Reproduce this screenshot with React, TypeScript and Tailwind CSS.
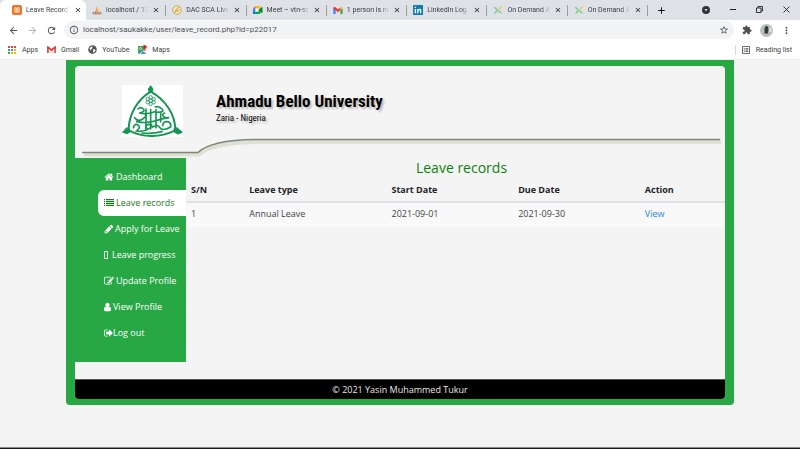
import type { ReactNode } from "react";
import {
  MdArrowBack,
  MdArrowForward,
  MdRefresh,
  MdInfoOutline,
  MdStarBorder,
  MdExtension,
  MdMoreVert,
  MdClose,
  MdAdd,
  MdOutlineListAlt,
  MdArrowDropDown,
} from "react-icons/md";

function XamppIcon() {
  return (
    <svg viewBox="0 0 18 18" className="size-[10px] shrink-0">
      <rect width="18" height="18" rx="3" fill="#ee7623" />
      <path d="M5 5h3v3h2V5h3v3l-2 1 2 1v3h-3v-3H8v3H5v-3l2-1-2-1z" fill="none" stroke="#fff" strokeWidth="1.3" />
    </svg>
  );
}

function PhpMyAdminIcon() {
  return (
    <svg viewBox="0 0 20 18" className="h-[9px] w-[10px] shrink-0">
      <path d="M8 1c3 2 4 7 4 11H6c2-3 3-7 2-11z" fill="#f5a547" />
      <path d="M13 4c2 2 3 5 2 8h-2z" fill="#f5c083" />
      <path d="M1 14l2-3 2 3 2-4 3 4 2-3 3 3 3-3 1 5H1z" fill="#8b8298" />
      <path d="M2 16h16" stroke="#ef9c3c" strokeWidth="2" />
    </svg>
  );
}

function DacIcon() {
  return (
    <svg viewBox="0 0 20 20" className="size-[10px] shrink-0">
      <circle cx="10" cy="10" r="8.5" fill="#f5edcc" stroke="#c5a63d" strokeWidth="2" />
      <path d="M6 15c1-5 3-8 8-10M8 12h4l2-3" fill="none" stroke="#b3922c" strokeWidth="2" />
    </svg>
  );
}

function MeetIcon() {
  return (
    <svg viewBox="0 0 20 16" className="h-[8px] w-[10px] shrink-0">
      <path d="M0 5l5-5v5z" fill="#ea4335" />
      <path d="M0 5h5v6H0z" fill="#2684fc" />
      <path d="M0 11h5v5H1q-1 0-1-1z" fill="#0066da" />
      <path d="M5 0h8q2 0 2 2v5l-4 1V5H5z" fill="#ffba00" />
      <path d="M5 11h6V8l4 1v5q0 2-2 2H5z" fill="#00ac47" />
      <path d="M5 5h6v6H5z" fill="#fff" />
      <path d="M11 8l7-6q1-1 1 1v10q0 2-1 1z" fill="#00832d" />
    </svg>
  );
}

function GmailIcon() {
  return (
    <svg viewBox="0 0 20 15" className="h-[7px] w-[10px] shrink-0">
      <path d="M0 3v11q0 1 1 1h4V6z" fill="#4285f4" />
      <path d="M15 6v9h4q1 0 1-1V3z" fill="#34a853" />
      <path d="M15 1v6l5-4V2q-1-3-4-1z" fill="#fbbc04" />
      <path d="M5 7V1l5 4 5-4v6l-5 4z" fill="#ea4335" />
      <path d="M0 2v1l5 4V1Q2-1 0 2z" fill="#c5221f" />
    </svg>
  );
}

function GmailRedIcon() {
  return (
    <svg viewBox="0 0 20 15" className="h-[7px] w-[9px] shrink-0">
      <path d="M4 4v11h12V4l-6 6z" fill="#f3e3e2" />
      <path d="M2 15V2l8 7 8-7v13" fill="none" stroke="#d93a30" strokeWidth="3.4" />
    </svg>
  );
}

function LinkedInIcon() {
  return (
    <svg viewBox="0 0 18 18" className="size-[10px] shrink-0">
      <rect width="18" height="18" rx="1" fill="#0b7fb0" />
      <path d="M3 7h2.5v8H3zM3 3h2.5v2.5H3zM7.500 7H10v1.200C11.500 6.200 15 6.500 15 10v5h-2.500v-4.500c0-2-2.500-2-2.500 0V15H7.500z" fill="#fff" />
    </svg>
  );
}

function OnDemandIcon() {
  return (
    <svg viewBox="0 0 18 18" className="size-[10px] shrink-0">
      <path d="M1 3c4 0 6 2 8 6-4 0-6-2-8-6z" fill="#74c5cf" />
      <path d="M17 2c-1 4-4 7-8 7 1-4 4-7 8-7z" fill="#f2cf63" />
      <path d="M9 9c4 0 6 3 7 7-4-1-7-3-7-7z" fill="#8dcb9a" />
      <path d="M9 9c0 4-3 6-7 7 1-4 3-7 7-7z" fill="#8ecf75" />
    </svg>
  );
}

function AppsIcon() {
  const colors = ["#ea4335", "#ea4335", "#ea4335", "#34a853", "#4285f4", "#fbbc04", "#34a853", "#fbbc04", "#fbbc04"];
  return (
    <svg viewBox="0 0 16 16" className="size-[8px] shrink-0">
      {colors.map((color, i) => (
        <rect key={i} x={(i % 3) * 6} y={Math.floor(i / 3) * 6} width="4" height="4" fill={color} />
      ))}
    </svg>
  );
}

function GlobeIcon() {
  return (
    <svg viewBox="0 0 18 18" className="size-[9px] shrink-0">
      <circle cx="9" cy="9" r="8.500" fill="#505357" />
      <path d="M3 6c2-3 5-3 6-3 1 2-1 2-1 4s-3 1-2 3-2 1-3-4zM10 9c2-1 5 0 5 2-1 2-3 4-5 4-1-2 1-2 0-6z" fill="#fff" />
    </svg>
  );
}

function MapsIcon() {
  return (
    <svg viewBox="0 0 18 18" className="size-[9px] shrink-0">
      <rect y="2" width="16" height="16" rx="2" fill="#3fa35f" />
      <path d="M2 18L16 6v10q0 2-2 2z" fill="#d8dde2" />
      <path d="M5 18l5-6 6 6z" fill="#4a8cf0" />
      <circle cx="5" cy="7" r="2" fill="none" stroke="#fff" strokeWidth="1.200" />
      <path d="M13 0c3 0 5 2 5 4 0 3-4 4-5 8-1-4-4-5-4-8 0-2 1-4 4-4z" fill="#dc4436" />
      <circle cx="13" cy="4" r="1.500" fill="#7c1c14" />
    </svg>
  );
}

const tabs: { title: string; icon: ReactNode }[] = [
  { title: "Leave Record", icon: <XamppIcon /> },
  { title: "localhost / 12", icon: <PhpMyAdminIcon /> },
  { title: "DAC SCA Live", icon: <DacIcon /> },
  { title: "Meet – vtn-sc", icon: <MeetIcon /> },
  { title: "1 person is no", icon: <GmailIcon /> },
  { title: "LinkedIn Log", icon: <LinkedInIcon /> },
  { title: "On Demand A", icon: <OnDemandIcon /> },
  { title: "On Demand A", icon: <OnDemandIcon /> },
];

function TabStrip() {
  return (
    <div className="flex h-5 items-stretch bg-[#dee1e6]">
      <div className="flex w-[81%] items-stretch">
        {tabs.map((tab, i) => (
          <div
            key={i}
            className={
              i === 0
                ? "flex w-[86px] shrink-0 items-center gap-1 rounded-t-md bg-white pr-1 pl-3"
                : "flex min-w-0 flex-1 items-center gap-1 pl-[6px]"
            }
          >
            {tab.icon}
            <span className="min-w-0 flex-1 mask-r-from-80% whitespace-nowrap text-[#3c4043]">{tab.title}</span>
            <button type="button" aria-label="Close tab" className="text-[#202124]">
              <MdClose className="size-[8px]" />
            </button>
            <span className={i === 0 ? "hidden" : "ml-px h-[11px] w-px bg-[#9a9da2]"} />
          </div>
        ))}
      </div>
      <div className="flex flex-1 items-center pl-2">
        <button type="button" aria-label="New tab">
          <MdAdd className="size-[11px]" />
        </button>
      </div>
      <div className="flex items-center gap-5 pr-[10px] pb-px text-[#202124]">
        <button type="button" aria-label="Search tabs" className="rounded-full bg-[#303338] text-white">
          <MdArrowDropDown className="size-[8px]" />
        </button>
        <button type="button" aria-label="Minimize" className="h-px w-[6px] bg-[#202124]" />
        <button type="button" aria-label="Restore">
          <svg viewBox="0 0 14 14" className="size-[7px]" fill="none" stroke="currentColor" strokeWidth="1.800">
            <path d="M1 4h9v9H1zM4 4V1h9v9h-3" />
          </svg>
        </button>
        <button type="button" aria-label="Close window">
          <svg viewBox="0 0 14 14" className="size-[7px]" stroke="currentColor" strokeWidth="1.800">
            <path d="M1 1l12 12M13 1L1 13" />
          </svg>
        </button>
      </div>
    </div>
  );
}

function AddressBar() {
  return (
    <div className="flex h-5 items-center bg-white px-2 text-[#4d5156]">
      <div className="flex w-14 items-center gap-2">
        <button type="button" aria-label="Back">
          <MdArrowBack className="size-[11px]" />
        </button>
        <button type="button" aria-label="Forward" className="text-[#b4b7ba]">
          <MdArrowForward className="size-[11px]" />
        </button>
        <button type="button" aria-label="Reload">
          <MdRefresh className="size-[11px]" />
        </button>
      </div>
      <div className="flex h-[18px] flex-1 items-center gap-1 rounded-full bg-[#f1f3f4] px-[5px]">
        <MdInfoOutline className="size-[10px]" />
        <input
          aria-label="Address"
          className="min-w-0 flex-1 bg-transparent text-[8px] text-[#4d5156] outline-none"
          defaultValue="localhost/saukakke/user/leave_record.php?id=p22017"
        />
        <button type="button" aria-label="Bookmark this page">
          <MdStarBorder className="size-[10px]" />
        </button>
      </div>
      <div className="flex items-center gap-2 pl-2">
        <button type="button" aria-label="Extensions">
          <MdExtension className="size-[10px]" />
        </button>
        <button type="button" aria-label="Account">
          <svg viewBox="0 0 26 26" className="size-[13px]">
            <circle cx="13" cy="13" r="13" fill="#b9bfb9" />
            <path d="M9 19V11q0-7 4-7t4 7l-1 8z" fill="#313b3c" />
            <path d="M18 8h5v8h-5z" fill="#dfe2df" />
          </svg>
        </button>
        <button type="button" aria-label="Menu">
          <MdMoreVert className="size-[11px]" />
        </button>
      </div>
    </div>
  );
}

function BookmarksBar() {
  return (
    <nav aria-label="Bookmarks" className="flex h-5 items-center gap-[9px] border-b border-[#ececec] bg-white px-2 text-[#3c4043]">
      <a href="#apps" className="flex items-center gap-[6px]">
        <AppsIcon />
        Apps
      </a>
      <a href="#gmail" className="flex items-center gap-[5px]">
        <GmailRedIcon />
        Gmail
      </a>
      <a href="#youtube" className="flex items-center gap-[5px]">
        <GlobeIcon />
        YouTube
      </a>
      <a href="#maps" className="flex items-center gap-[5px]">
        <MapsIcon />
        Maps
      </a>
      <a href="#reading" className="ml-auto flex items-center gap-[5px] border-l border-[#dadce0] pl-[5px]">
        <MdOutlineListAlt className="size-[10px]" />
        Reading list
      </a>
    </nav>
  );
}

function Crest() {
  return (
    <svg viewBox="0 0 183 156" className="h-[52px] w-[61px] bg-white" fill="none" stroke="#159653" role="img" aria-label="University crest">
      <path d="M86 20C46 44 20 88 20 136Q88 170 160 136C160 88 130 44 86 20z" strokeWidth="6" />
      <path d="M86 2l-7 10 3 10h8l3-10zM2 142l12-14 8 3 2 10-9 5zM181 142l-16-14-9 3v10l12 6z" fill="#159653" strokeWidth="3" />
      <g strokeWidth="2.500">
        <circle cx="86" cy="47" r="5" />
        <circle cx="86" cy="37" r="5" />
        <circle cx="86" cy="57" r="5" />
        <circle cx="77" cy="42" r="5" />
        <circle cx="95" cy="42" r="5" />
        <circle cx="77" cy="52" r="5" />
        <circle cx="95" cy="52" r="5" />
      </g>
      <g strokeWidth="5" strokeLinecap="round">
        <path d="M48 72q8-8 16 0t-12 12q22 6 46-4M100 66q10-4 20 6t-16 10" />
        <path d="M38 98q10 14 24 4t8-14M44 110q30 6 54-2t42-10M128 84q-10 4-4 10t16 4" />
        <path d="M72 72v62M86 74v58M102 74v54M116 86v24" />
        <path d="M34 128q4-14 14-8t-4 18q22 4 38-8t-2-12q-14 4-6 14M92 126q14-10 22 2t32-2q2-14-10-16t-14 12" />
        <path d="M60 144q30 4 60-4" />
      </g>
    </svg>
  );
}

function Banner() {
  return (
    <header>
      <div className="flex items-start gap-[33px] pt-[19px] pl-[47px] leading-none">
        <Crest />
        <div className="pt-1 font-['Roboto_Condensed','Open_Sans_Condensed','Liberation_Sans_Narrow','Liberation_Sans',sans-serif] text-black">
          <h1 className="text-[17px] leading-6 font-bold text-shadow-[2px_2px_2px_#bbbbbb]">Ahmadu Bello University</h1>
          <p className="text-[9px] leading-[10px] text-shadow-[2px_2px_2px_#bbbbbb]">Zaria - Nigeria</p>
        </div>
      </div>
      <svg viewBox="0 0 650 21" preserveAspectRatio="none" className="block h-[21px] w-full" fill="none">
        <path d="M9 17.500H124Q136 6 180 5H646" stroke="#dde1d3" strokeWidth="4" />
        <path d="M7 15.500H123Q136 3 180 2.500H645" stroke="#7d8776" strokeWidth="1.500" />
      </svg>
    </header>
  );
}

function Glyph({ d }: { d: string }) {
  return (
    <svg viewBox="0 0 1792 1792" className="size-[10px] shrink-0" fill="currentColor">
      <path d={d} />
    </svg>
  );
}

const menu: { label: string; icon: ReactNode; spacing: string }[] = [
  {
    label: "Dashboard",
    spacing: "gap-[2px]",
    icon: (
      <Glyph d="M1472 992v480q0 26-19 45t-45 19h-384v-384h-256v384h-384q-26 0-45-19t-19-45v-480q0-1 .5-3t.5-3l575-474 575 474q1 2 1 6zm223-69l-62 74q-8 9-21 11h-3q-13 0-21-7l-692-577-692 577q-12 8-24 7-13-2-21-11l-62-74q-8-10-7-23.500t11-21.500l719-599q32-26 76-26t76 26l244 204v-195q0-14 9-23t23-9h192q14 0 23 9t9 23v408l219 182q10 8 11 21.500t-7 23.500z" />
    ),
  },
  {
    label: "Leave records",
    spacing: "gap-[2px]",
    icon: (
      <svg viewBox="0 0 10 10" className="size-[10px] shrink-0" fill="currentColor" shapeRendering="crispEdges">
        <path d="M0 1h1v1H0zM2 1h8v1H2zM0 3h1v1H0zM2 3h8v1H2zM0 5h1v1H0zM2 5h8v1H2zM0 7h1v1H0zM2 7h8v1H2z" />
        <path d="M0 2h1v1H0zM2 2h8v1H2zM0 4h1v1H0zM2 4h8v1H2zM0 6h1v1H0zM2 6h8v1H2z" fillOpacity="0.25" />
      </svg>
    ),
  },
  {
    label: "Apply for Leave",
    spacing: "gap-px",
    icon: (
      <Glyph d="M491 1536l91-91-235-235-91 91v107h128v128h107zM960 416l416 416-832 832h-416v-416zm683 96q0 53-37 90l-166 166-416-416 166-165q36-38 90-38 53 0 91 38l235 234q37 39 37 91z" />
    ),
  },
  {
    label: "Leave progress",
    spacing: "gap-1",
    icon: <span className="h-2 w-1 border border-white/80" />,
  },
  {
    label: "Update Profile",
    spacing: "gap-[2px]",
    icon: (
      <Glyph d="M888 1184l116-116-152-152-116 116v56h96v96h56zm440-720q-16-16-33 1l-350 350q-17 17-1 33t33-1l350-350q17-17 1-33zm80 594v190q0 119-84.500 203.500t-203.500 84.500h-832q-119 0-203.500-84.500t-84.500-203.500v-832q0-119 84.500-203.500t203.500-84.500h832q63 0 117 25 15 7 18 23 3 17-9 29l-49 49q-14 14-32 8-23-6-45-6h-832q-66 0-113 47t-47 113v832q0 66 47 113t113 47h832q66 0 113-47t47-113v-126q0-13 9-22l64-64q15-15 35-7t20 29zm-96-738l288 288-672 672h-288v-288zm444 132l-92 92-288-288 92-92q28-28 68-28t68 28l152 152q28 28 28 68t-28 68z" />
    ),
  },
  {
    label: "View Profile",
    spacing: "gap-[2px]",
    icon: (
      <svg viewBox="256 0 1280 1792" className="h-[10px] w-[7px] shrink-0" fill="currentColor">
        <path d="M1536 1399q0 109-62.500 187t-150.500 78h-854q-88 0-150.500-78t-62.500-187q0-85 8.500-160.500t31.500-152 58.500-131 94-89 134.500-34.500q131 128 313 128t313-128q76 0 134.500 34.500t94 89 58.500 131 31.500 152 8.500 160.500zm-256-887q0 159-112.500 271.500t-271.500 112.500-271.500-112.500-112.500-271.500 112.500-271.500 271.500-112.500 271.500 112.500 112.500 271.500z" />
      </svg>
    ),
  },
  {
    label: "Log out",
    spacing: "gap-0",
    icon: (
      <svg viewBox="64 0 1600 1792" className="h-[10px] w-[9px] shrink-0" fill="currentColor">
        <path d="M704 1440q0 4 1 20t.5 26.500-3 23.500-10 19.500-20.500 6.500h-320q-119 0-203.500-84.500t-84.500-203.500v-704q0-119 84.500-203.500t203.500-84.500h320q13 0 22.500 9.500t9.500 22.500q0 4 1 20t.5 26.500-3 23.500-10 19.500-20.500 6.500h-320q-66 0-113 47t-47 113v704q0 66 47 113t113 47h312l11.500 1 11.500 3 8 5.500 7 9 2 13.500zm928-544q0 26-19 45l-544 544q-19 19-45 19t-45-19-19-45v-288h-448q-26 0-45-19t-19-45v-384q0-26 19-45t45-19h448v-288q0-26 19-45t45-19 45 19l544 544q19 19 19 45z" />
      </svg>
    ),
  },
];

function Sidebar() {
  return (
    <nav aria-label="Main" className="w-[111px] shrink-0 bg-[#28a745] pt-[6px] pb-4 pl-[23px]">
      <ul>
        {menu.map((item, i) => (
          <li key={item.label}>
            <a
              href="#menu"
              className={[
                "flex h-[26px] items-center pl-[6px] text-[9px] whitespace-nowrap",
                item.spacing,
                i === 1 ? "rounded-l-md bg-white text-[#1c7c1c]" : "text-white",
              ].join(" ")}
            >
              {item.icon}
              {item.label}
            </a>
          </li>
        ))}
      </ul>
    </nav>
  );
}

function Records() {
  return (
    <section className="min-w-0 flex-1">
      <h2 className="pt-px pl-3 text-center text-[14px] leading-[18px] font-medium text-[#108010]">Leave records</h2>
      <table className="w-full table-fixed text-left text-[9px] leading-[14px]">
        <colgroup>
          <col className="w-[10.8%]" />
          <col className="w-[26.4%]" />
          <col className="w-[23.5%]" />
          <col className="w-[23.5%]" />
          <col />
        </colgroup>
        <thead>
          <tr className="border-b-2 border-[#dee2e6] text-[#212529]">
            <th className="px-[5px] pt-[6px] pb-1">S/N</th>
            <th className="px-[5px] pt-[6px] pb-1">Leave type</th>
            <th className="px-[5px] pt-[6px] pb-1">Start Date</th>
            <th className="px-[5px] pt-[6px] pb-1">Due Date</th>
            <th className="px-[5px] pt-[6px] pb-1">Action</th>
          </tr>
        </thead>
        <tbody>
          <tr className="bg-[#f9f9f9] text-[#404448]">
            <td className="px-[5px] pt-1 pb-[6px]">1</td>
            <td className="px-[5px] pt-1 pb-[6px]">Annual Leave</td>
            <td className="px-[5px] pt-1 pb-[6px]">2021-09-01</td>
            <td className="px-[5px] pt-1 pb-[6px]">2021-09-30</td>
            <td className="px-[5px] pt-1 pb-[6px]">
              <a href="#view" className="text-[#2684f0]">
                View
              </a>
            </td>
          </tr>
        </tbody>
      </table>
    </section>
  );
}

export default function App() {
  return (
    <div className="flex min-h-screen flex-col bg-[#f4f4f4] font-['Open_Sans','Noto_Sans',sans-serif]">
      <div className="font-['Roboto','Open_Sans',sans-serif] text-[7px] leading-[10px]">
        <TabStrip />
        <AddressBar />
        <BookmarksBar />
      </div>
      <main className="mx-auto w-[calc(100%-132px)] rounded-b bg-[#28a745] px-[9px] pt-[6px] pb-[6px]">
        <div className="overflow-hidden rounded bg-[#f4f4f4]">
          <Banner />
          <div className="flex items-start pb-[17px]">
            <Sidebar />
            <Records />
          </div>
          <footer className="border-t border-[#555555] bg-black pt-[3px] pb-[2px] text-center text-[9px] leading-[14px] text-[#e8e8e8]">
            © 2021 Yasin Muhammed Tukur
          </footer>
        </div>
      </main>
      <div className="mt-auto h-[2px] border-t border-[#8a8a8a] bg-[#1c1c1c]" />
    </div>
  );
}
